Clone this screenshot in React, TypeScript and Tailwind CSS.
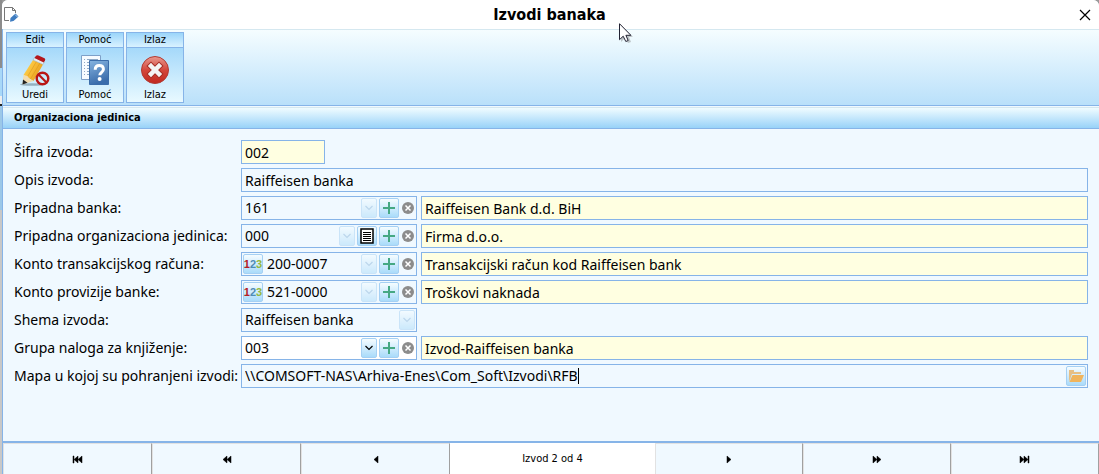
import { useState } from "react";
import type { ReactNode } from "react";

interface ToolGroup {
	title: string;
	label: string;
	icon: ReactNode;
}

interface FormRow {
	id: string;
	label: string;
	value: string;
	description?: string;
	numeric?: boolean;
	list?: boolean;
	active?: boolean;
	clearable?: boolean;
}

function PencilIcon() {
	return (
		<svg width="32" height="32" viewBox="0 0 32 32" aria-hidden="true">
			<defs>
				<linearGradient id="pencil" x1="0" y1="0" x2="1" y2="0.6">
					<stop offset="0" stopColor="#ffd95a" />
					<stop offset="0.5" stopColor="#f9bf38" />
					<stop offset="1" stopColor="#e59a1c" />
				</linearGradient>
			</defs>
			<ellipse cx="13" cy="29.5" rx="12" ry="1.3" fill="#6b8798" opacity="0.6" />
			<path d="M14 5 24 9.5 14.5 26 4.500 20z" fill="url(#pencil)" />
			<path d="M17.500 6.500 8 22.500M21 8 11.500 24" stroke="#d9971f" strokeWidth="0.6" />
			<path d="M4.500 20 8.500 21 10.500 24 14.500 26 3.500 29.500z" fill="#f3dcae" />
			<path d="M4 24.500 8.500 27.800 3.500 29.500z" fill="#222" />
			<path d="M14 5 15.500 2.500 25.500 7 24 9.500z" fill="#e8edf0" stroke="#9aa5ab" strokeWidth="0.5" />
			<path d="M15.500 3 17 .8Q18 0 19.500 .5L25.500 3.300Q26.700 4 26 5.300L24.800 7.500z" fill="#b4161c" />
			<circle cx="23.5" cy="23.5" r="5.8" fill="none" stroke="#b91515" strokeWidth="2.4" />
			<path d="m19.5 19.5 8 8" stroke="#b91515" strokeWidth="2.2" />
		</svg>
	);
}

function HelpIcon() {
	return (
		<svg width="32" height="32" viewBox="0 0 32 32" aria-hidden="true">
			<defs>
				<linearGradient id="help" x1="0" y1="0" x2="0.3" y2="1">
					<stop offset="0" stopColor="#86b4e0" />
					<stop offset="1" stopColor="#3a6cab" />
				</linearGradient>
			</defs>
			<path d="M2.5 .5h19v24h-19z" fill="#f7fbff" stroke="#7ea0c8" />
			<path d="M5 4.500h1M5 7.500h1M5 10.500h1M5 13.500h1M5 16.500h1M5 19.500h1M8 4.500h11M8 7.500h11M8 10.500h11M8 13.500h11M8 16.500h11M8 19.500h11" stroke="#8fa9c6" />
			<path d="M10.500 5.500h19v24h-19z" fill="url(#help)" stroke="#3c6daa" />
			<path
				d="M16.200 14.800c0-3 1.600-4.300 4-4.300 2.600 0 4.200 1.400 4.200 3.700 0 3-3.600 3.200-3.600 6"
				fill="none"
				stroke="#fff"
				strokeWidth="3"
			/>
			<circle cx="20.600" cy="24" r="2" fill="#fff" />
		</svg>
	);
}

function ExitIcon() {
	return (
		<svg width="32" height="32" viewBox="0 0 32 32" aria-hidden="true">
			<defs>
				<linearGradient id="exit" x1="0" y1="0" x2="0" y2="1">
					<stop offset="0" stopColor="#e99a90" />
					<stop offset="0.5" stopColor="#d4473c" />
					<stop offset="1" stopColor="#c1281f" />
				</linearGradient>
			</defs>
			<circle cx="16" cy="15" r="13.500" fill="url(#exit)" stroke="#b23a32" />
			<path d="m12 11 8 8m0-8-8 8" stroke="#a53028" strokeWidth="6.500" strokeLinecap="square" />
			<path d="m12 11 8 8m0-8-8 8" stroke="#f4f4f4" strokeWidth="4.500" strokeLinecap="square" />
		</svg>
	);
}

function DocumentIcon() {
	return (
		<svg width="16" height="18" viewBox="0 0 16 18" aria-hidden="true">
			<path d="M5 14.500H.5V1.500h8l3 3V7M8.500 1.500v3h3" fill="none" stroke="#777" />
			<path d="m6.500 12 5-4.500 3 3-5 4.500-3.500.8z" fill="#3e7cc0" />
			<path d="m11 8.500 2.500 2.500" stroke="#cfe2f5" strokeWidth="0.8" />
		</svg>
	);
}

function Chevron() {
	return (
		<svg width="8" height="6" viewBox="0 0 8 6" aria-hidden="true">
			<path d="m.5 1 3.500 3.500L7.500 1" fill="none" stroke="currentColor" strokeWidth="1.200" />
		</svg>
	);
}

function FolderIcon() {
	return (
		<svg width="16" height="14" viewBox="0 0 16 14" aria-hidden="true">
			<path d="M1 13V1h5v2h7v2H4z" fill="#e6bf85" />
			<path d="M4.500 6H16l-3 7H1.500z" fill="#f0b45c" />
		</svg>
	);
}

const tools: ToolGroup[] = [
	{ title: "Edit", label: "Uredi", icon: <PencilIcon /> },
	{ title: "Pomoć", label: "Pomoć", icon: <HelpIcon /> },
	{ title: "Izlaz", label: "Izlaz", icon: <ExitIcon /> },
];

const rows: FormRow[] = [
	{ id: "banka", label: "Pripadna banka:", value: "161", description: "Raiffeisen Bank d.d. BiH", clearable: true },
	{ id: "jedinica", label: "Pripadna organizaciona jedinica:", value: "000", description: "Firma d.o.o.", list: true, clearable: true },
	{ id: "racun", label: "Konto transakcijskog računa:", value: "200-0007", description: "Transakcijski račun kod Raiffeisen bank", numeric: true, clearable: true },
	{ id: "provizija", label: "Konto provizije banke:", value: "521-0000", description: "Troškovi naknada", numeric: true, clearable: true },
	{ id: "shema", label: "Shema izvoda:", value: "Raiffeisen banka" },
	{ id: "grupa", label: "Grupa naloga za knjiženje:", value: "003", description: "Izvod-Raiffeisen banka", active: true, clearable: true },
];

// Navigator glyphs are drawn on a 12x9 grid
const navIcons = {
	first: "M1 1h1v7H1zM6 1v7L2 4.500zM10 1v7L6 4.500z",
	fastBack: "M6 1v7L2 4.500zM10 1v7L6 4.500z",
	back: "M8 1v7L4 4.500z",
	next: "M4 1v7l4-3.500z",
	fastNext: "M2 1v7l4-3.500zM6 1v7l4-3.500z",
	last: "M1 1v7l4-3.500zM5 1v7l4-3.500zM9 1h1v7H9z",
};

function NavButton({ label, path }: { label: string; path: string }) {
	return (
		<button
			type="button"
			aria-label={label}
			className="flex items-center justify-center border-t border-r border-l border-t-[#e2e2e2] border-r-[#a0a0a0] border-l-[#e2e2e2] bg-[#f0f9ff]"
		>
			<svg width="12" height="9" viewBox="0 0 12 9" aria-hidden="true">
				<path d={path} fill="#000" stroke="#000" strokeWidth="0.5" />
			</svg>
		</button>
	);
}

const smallButton =
	"flex h-5 shrink-0 items-center justify-center rounded-xs border border-[#a5d0f3] bg-linear-to-b from-[#f5fcff] to-[#a9dbfa]";

function LookupRow({ row }: { row: FormRow }) {
	return (
		<>
			<label htmlFor={row.id} className="whitespace-nowrap">
				{row.label}
			</label>
			<div className={`flex h-6 items-center gap-0.5 border border-[#86b4e8] px-px ${row.active ? "bg-white" : "bg-[#f0f9ff]"}`}>
				{row.numeric && (
					<button type="button" aria-label="Konto" className={`${smallButton} w-5 font-["Liberation_Sans"] text-[11px] font-bold`}>
						<span className="text-[#b32025]">1</span>
						<span className="text-[#4f8cb5]">2</span>
						<span className="text-[#93b83f]">3</span>
					</button>
				)}
				<select id={row.id} defaultValue={row.value} className="min-w-0 flex-1 appearance-none pl-0.5 outline-none">
					<option>{row.value}</option>
				</select>
				<span className={`${smallButton} w-4 ${row.active ? "text-black" : "text-[#8ab5da] opacity-50"}`}>
					<Chevron />
				</span>
				{row.list && (
					<button type="button" aria-label="Lista" className={`${smallButton} w-5`}>
						<svg width="14" height="16" viewBox="0 0 14 16" aria-hidden="true">
							<path d="M1 1h12v14H1z" fill="#fff" stroke="#000" strokeWidth="1.500" />
							<path d="M3 4.500h8M3 6.500h8M3 8.500h8M3 10.500h8M3 12.500h8" stroke="#000" />
						</svg>
					</button>
				)}
				{row.clearable && (
					<>
						<button type="button" aria-label="Dodaj" className={`${smallButton} w-5`}>
							<svg width="12" height="12" viewBox="0 0 12 12" aria-hidden="true">
								<path d="M6 0v12M0 6h12" stroke="#45a883" strokeWidth="2" />
							</svg>
						</button>
						<button type="button" aria-label="Obriši" className="flex w-3.5 shrink-0 justify-center">
							<svg width="12" height="12" viewBox="0 0 12 12" aria-hidden="true">
								<circle cx="6" cy="6" r="6" fill="#8c8c8c" />
								<path d="m3.500 3.500 5 5m0-5-5 5" stroke="#fff" strokeWidth="1.500" />
							</svg>
						</button>
					</>
				)}
			</div>
			{row.description ? (
				<input
					readOnly
					aria-label={`${row.label} naziv`}
					value={row.description}
					className="h-6 min-w-0 border border-[#86b4e8] bg-[#ffffe1] px-[3px] outline-none"
				/>
			) : (
				<span />
			)}
		</>
	);
}

export default function App() {
	const [code, setCode] = useState("002");
	const [name, setName] = useState("Raiffeisen banka");
	const [folder, setFolder] = useState("\\\\COMSOFT-NAS\\Arhiva-Enes\\Com_Soft\\Izvodi\\RFB");

	return (
		<div className="flex min-h-screen bg-[#999] font-['DejaVu_Sans_Condensed','Noto_Sans',sans-serif] text-[14px] leading-5 text-black">
			{/* Edge of the window behind the dialog */}
			<div className="w-0.5 shrink-0 bg-[linear-gradient(#8c8c8c_0_68px,#a8d8f8_68px_96px,#eee_96px_104px,#222_104px_106px,#9cc8e8_106px_210px,#c8c8c8_210px)]" />
			<main className="flex min-w-0 flex-1 flex-col overflow-hidden rounded-t-md bg-[#f0f9ff]">
				<header className="flex h-[29px] items-center bg-white pr-2 pl-0.5">
					<DocumentIcon />
					<h1 className="flex-1 text-center text-[16px] font-bold">Izvodi banaka</h1>
					<button type="button" aria-label="Zatvori">
						<svg width="12" height="12" viewBox="0 0 12 12" aria-hidden="true">
							<path d="m1 1 10 10m0-10L1 11" stroke="#000" strokeWidth="1.200" />
						</svg>
					</button>
				</header>

				<div className="flex flex-1 flex-col border-l border-[#86b4e8]">
					<div className="flex h-[77px] gap-0.5 border-t border-b border-t-[#d5e8f0] border-b-[#86b4e8] bg-linear-to-b from-[#f5fdff] to-[#b9e0fa] px-[3px] py-0.5 text-[11px] leading-[14px]">
						{tools.map((tool) => (
							<section key={tool.title} className="flex w-[58px] flex-col border border-[#86b4e8]">
								<h2 className="border-b border-[#86b4e8] bg-linear-to-b from-[#9bd5fa] to-[#d9f2ff] text-center">{tool.title}</h2>
								<button type="button" className="flex flex-1 flex-col items-center justify-end gap-px bg-linear-to-b from-[#a5d9fa] to-[#e8f9ff]">
									{tool.icon}
									{tool.label}
								</button>
							</section>
						))}
					</div>

					<h2 className="mt-px h-[22px] border-t border-b border-t-[#d5e8f0] border-b-[#86b4e8] bg-linear-to-b from-[#f0fcff] to-[#98d2f8] pl-[11px] text-[11px] leading-5 font-bold">
						Organizaciona jedinica
					</h2>

					<form className="grid flex-1 grid-cols-[223px_176px_1fr] content-start items-center gap-x-1 gap-y-1 pt-[11px] pr-[11px] pl-[11px] font-['Noto_Sans',sans-serif]">
						<label htmlFor="sifra">Šifra izvoda:</label>
						<input
							id="sifra"
							value={code}
							onChange={(e) => setCode(e.target.value)}
							className="col-span-2 h-6 w-[84px] border border-[#86b4e8] bg-[#ffffe1] px-[3px] outline-none"
						/>
						<label htmlFor="opis">Opis izvoda:</label>
						<input
							id="opis"
							value={name}
							onChange={(e) => setName(e.target.value)}
							className="col-span-2 h-6 border border-[#86b4e8] px-[3px] outline-none"
						/>
						{rows.map((row) => (
							<LookupRow key={row.id} row={row} />
						))}
						<label htmlFor="mapa" className="whitespace-nowrap">
							Mapa u kojoj su pohranjeni izvodi:
						</label>
						<div className="col-span-2 flex h-6 items-center border border-[#86b4e8] pr-px pl-[3px]">
							<input
								id="mapa"
								value={folder}
								onChange={(e) => setFolder(e.target.value)}
								className="field-sizing-content min-w-0 caret-transparent outline-none"
							/>
							<span className="h-4 w-px bg-black" />
							<button type="button" aria-label="Odaberi mapu" className={`${smallButton} ml-auto w-5`}>
								<FolderIcon />
							</button>
						</div>
					</form>

					<nav className="grid h-[33px] grid-cols-[149fr_149fr_149fr_205fr_148fr_148fr_148fr] border-t-2 border-[#86b4e8] bg-white text-[11px]">
						<NavButton label="Prvi" path={navIcons.first} />
						<NavButton label="Brzo nazad" path={navIcons.fastBack} />
						<NavButton label="Nazad" path={navIcons.back} />
						<output className="flex items-center justify-center">Izvod 2 od 4</output>
						<NavButton label="Naprijed" path={navIcons.next} />
						<NavButton label="Brzo naprijed" path={navIcons.fastNext} />
						<NavButton label="Zadnji" path={navIcons.last} />
					</nav>
				</div>
			</main>

			{/* Mouse pointer */}
			<svg className="pointer-events-none absolute top-[23px] left-[619px]" width="14" height="21" viewBox="0 0 14 21" aria-hidden="true">
				<path d="M2 2v17l4-4 3 5 3-1-2-5h4z" fill="#777" opacity="0.400" />
				<path d="M.5.700v16l3.700-3.500 2.600 5.300 2.400-1-2.300-5.200h5z" fill="#fff" stroke="#223" />
			</svg>
		</div>
	);
}
